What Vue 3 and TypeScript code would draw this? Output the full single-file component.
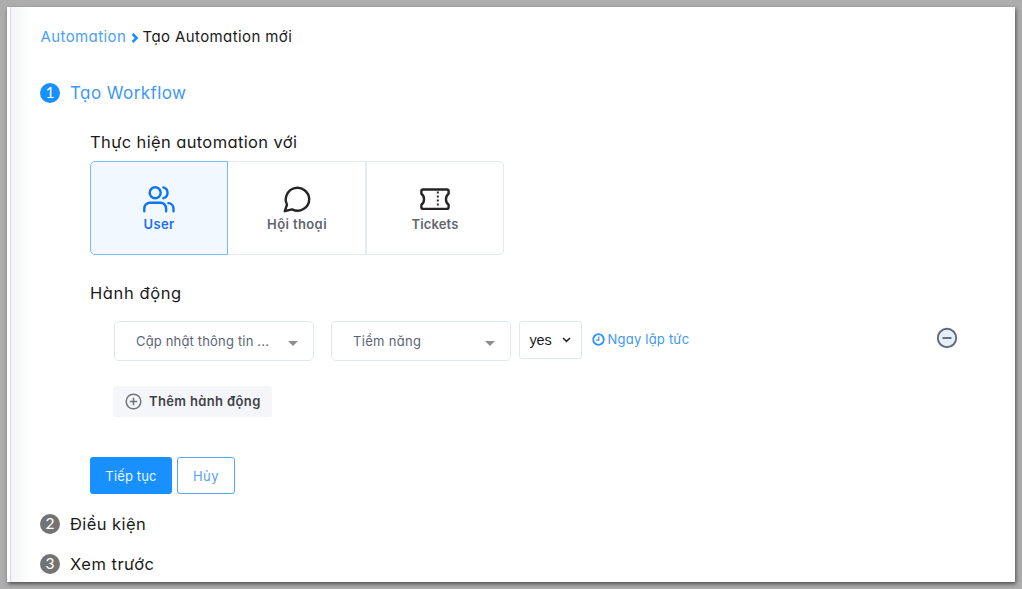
<script setup lang="ts">
import { ref } from 'vue'

type Target = 'user' | 'chat' | 'ticket'

const targets: { id: Target; label: string }[] = [
  { id: 'user', label: 'User' },
  { id: 'chat', label: 'Hội thoại' },
  { id: 'ticket', label: 'Tickets' },
]
const selected = ref<Target>('user')
</script>

<template>
  <div class="frame">
    <main class="panel">
      <nav class="breadcrumb">
        <a class="crumb-link">Automation</a>
        <svg class="crumb-sep" width="8" height="10" viewBox="0 0 8 10"><path d="M1.6 1l4 4-4 4" /></svg>
        <span class="crumb-current">Tạo Automation mới</span>
      </nav>

      <div class="step step-1">
        <span class="badge active">1</span>
        <span class="step-title active t-workflow">Tạo Workflow</span>
      </div>

      <section class="body">
        <h3 class="heading h-target">Thực hiện automation với</h3>
        <div class="targets">
          <button
            v-for="t in targets"
            :key="t.id"
            class="target"
            :class="[t.id, { selected: selected === t.id }]"
            @click="selected = t.id"
          >
            <svg v-if="t.id === 'user'" class="icon" width="34" height="30" viewBox="0 0 34 30">
              <circle cx="13.2" cy="8.8" r="5.5" />
              <path d="M2.3 27.2v-2.8a5.6 5.6 0 0 1 5.6-5.6h10.6a5.6 5.6 0 0 1 5.6 5.6v2.8" />
              <path d="M21.4 3.4a5.6 5.6 0 0 1 0 10.8" />
              <path d="M26.4 19.1a5.5 5.5 0 0 1 5.1 5.4v2.7" />
            </svg>
            <svg v-else-if="t.id === 'chat'" class="icon" width="34" height="30" viewBox="0 0 34 30">
              <path d="M29.2 15.2a11.7 11.7 0 0 1-17.1 10.2L4.8 27.2l2.2-6.5A11.7 11.7 0 1 1 29.2 15.2z" />
            </svg>
            <svg v-else class="icon" width="34" height="30" viewBox="0 0 34 30">
              <path d="M5 5.5h24a1.6 1.6 0 0 1 1.6 1.6v2.6c-3.5 2.6-3.5 8.4 0 11v2.6a1.6 1.6 0 0 1-1.6 1.6H5a1.6 1.6 0 0 1-1.6-1.6v-2.6c3.5-2.6 3.5-8.4 0-11V7.1A1.6 1.6 0 0 1 5 5.5z" />
              <path class="perforation" d="M19.8 7.6v16" />
            </svg>
            <span class="target-label">{{ t.label }}</span>
          </button>
        </div>

        <h3 class="heading h-action">Hành động</h3>
        <div class="action-row">
          <div class="select wide">
            <span class="s-update">Cập nhật thông tin ...</span>
            <i class="caret"></i>
          </div>
          <div class="select mid">
            <span class="s-potential">Tiềm năng</span>
            <i class="caret"></i>
          </div>
          <div class="native">
            <span>yes</span>
            <svg width="9" height="6" viewBox="0 0 9 6"><path d="M1 1l3.5 3.4L8 1" /></svg>
          </div>
          <a class="when">
            <svg width="13" height="13" viewBox="0 0 13 13">
              <circle cx="6.5" cy="6.5" r="5.3" />
              <path class="hand" d="M6.8 3.6v3.5H4" />
            </svg>
            <span>Ngay lập tức</span>
          </a>
          <svg class="remove" width="22" height="22" viewBox="0 0 22 22">
            <circle cx="11" cy="11" r="9.2" />
            <path d="M6.5 11h9" />
          </svg>
        </div>

        <button class="add">
          <svg width="17" height="17" viewBox="0 0 17 17">
            <circle cx="8.5" cy="8.5" r="7.3" />
            <path d="M8.5 4.8v7.4M4.8 8.5h7.4" />
          </svg>
          <span>Thêm hành động</span>
        </button>

        <div class="buttons">
          <button class="btn primary">Tiếp tục</button>
          <button class="btn outline">Hủy</button>
        </div>
      </section>

      <div class="step step-2">
        <span class="badge">2</span>
        <span class="step-title t-condition">Điều kiện</span>
      </div>
      <div class="step step-3">
        <span class="badge">3</span>
        <span class="step-title t-preview">Xem trước</span>
      </div>
    </main>
  </div>
</template>

<style>
html,
body {
  margin: 0;
  background: #adadad;
}
</style>

<style scoped>
.frame {
  box-sizing: border-box;
  width: 1022px;
  height: 589px;
  padding: 7px;
  overflow: hidden;
  background: #adadad;
  font-family: Inter, 'Noto Sans', sans-serif;
  font-feature-settings: 'cv11', 'ss03';
  color: #1a1a1a;
}
.panel {
  box-sizing: border-box;
  width: 1008px;
  height: 575px;
  padding: 20px 0 0 33px;
  background:
    linear-gradient(#d9dce0, #d9dce0) 3px 0 / 1px 100% no-repeat,
    linear-gradient(to right, #f3f4f6, #ffffff) 4px 0 / 20px 100% no-repeat,
    #ffffff;
  box-shadow: 1px 2px 4px rgba(0, 0, 0, 0.55);
}
button {
  font: inherit;
  font-feature-settings: inherit;
  margin: 0;
  padding: 0;
  border: 0;
  background: none;
}
svg {
  display: block;
  fill: none;
  flex: none;
}
.breadcrumb {
  display: flex;
  align-items: center;
  height: 20px;
  padding-left: 0.5px;
  font-size: 15px;
  letter-spacing: 0.4px;
  line-height: 20px;
  white-space: nowrap;
}
.crumb-link {
  width: 90px;
  color: #4aa0f8;
}
.crumb-sep {
  width: 8px;
  margin: 1px 4px 0 0;
  stroke: #1b8cff;
  stroke-width: 2.5;
}
.step {
  display: flex;
  align-items: center;
  height: 24px;
}
.step-1 {
  margin-top: 34px;
}
.badge {
  width: 20px;
  height: 20px;
  margin-right: 10px;
  border-radius: 50%;
  background: #737373;
  color: #ffffff;
  font-family: Lato, sans-serif;
  font-size: 15.5px;
  line-height: 19px;
  text-align: center;
}
.badge.active {
  background: #1890ff;
}
.step-title {
  font-size: 16.5px;
  white-space: nowrap;
}
.step-title.active {
  color: #3d98f8;
}
.t-workflow {
  font-size: 17px;
  letter-spacing: 0.42px;
}
.t-condition {
  letter-spacing: 0.42px;
}
.t-preview {
  letter-spacing: 0.5px;
}
.body {
  padding-left: 50px;
}
.heading {
  height: 24px;
  margin: 0;
  font-size: 16.5px;
  font-weight: 400;
  line-height: 24px;
  white-space: nowrap;
}
.h-target {
  margin-top: 25px;
  letter-spacing: 0.37px;
}
.targets {
  display: flex;
  margin-top: 7px;
}
.target {
  box-sizing: border-box;
  display: flex;
  flex-direction: column;
  align-items: center;
  width: 138px;
  height: 94px;
  padding-top: 22px;
  border: 1px solid #e2eaf2;
  border-left-width: 0;
  color: #5f6670;
}
.target:first-child {
  border-radius: 5px 0 0 5px;
}
.target:last-child {
  border-left-width: 1px;
  border-radius: 0 5px 5px 0;
}
.target.selected {
  border: 1px solid #7dbbf6;
  background: #f1f8ff;
  color: #1f70e8;
}
.icon {
  stroke: #242424;
  stroke-width: 2.4;
  stroke-linecap: round;
  stroke-linejoin: round;
}
.selected .icon {
  stroke: #0b74f0;
}
.icon .perforation {
  stroke-width: 1.9;
  stroke-linecap: butt;
  stroke-dasharray: 2 2;
}
.target-label {
  height: 18px;
  font-size: 13px;
  font-weight: 600;
  letter-spacing: 0.3px;
  line-height: 21px;
}
.chat .target-label {
  padding-left: 1px;
  letter-spacing: 0.4px;
}
.ticket .target-label {
  letter-spacing: 0.12px;
}
.h-action {
  margin-top: 26px;
  letter-spacing: 0.6px;
}
.action-row {
  display: flex;
  align-items: flex-start;
  height: 40px;
  margin-top: 16px;
  padding-left: 24px;
}
.select {
  box-sizing: border-box;
  display: flex;
  align-items: center;
  justify-content: space-between;
  height: 40px;
  padding: 0 15px 0 21px;
  border: 1px solid #e0e8f1;
  border-radius: 5px;
  color: #5a6675;
  font-size: 13px;
  white-space: nowrap;
}
.select.wide {
  width: 200px;
  margin-right: 17px;
}
.select.mid {
  width: 180px;
  margin-right: 8px;
}
.s-update {
  letter-spacing: 0.17px;
}
.s-potential {
  letter-spacing: 0.33px;
}
.caret {
  margin-top: 4px;
  border: 5px solid transparent;
  border-top-color: #8d8d8d;
  border-bottom: 0;
}
.native {
  box-sizing: border-box;
  display: flex;
  align-items: center;
  justify-content: space-between;
  width: 63px;
  height: 38px;
  padding: 0 10.5px 0 9.5px;
  border: 1px solid #e0e8f1;
  border-radius: 3px;
  font-family: 'Liberation Sans', sans-serif;
  font-size: 14.5px;
  letter-spacing: -0.2px;
}
.native svg {
  stroke: #222222;
  stroke-width: 1.5;
}
.when {
  display: flex;
  align-items: center;
  gap: 3px;
  height: 36px;
  margin-left: 9.5px;
  color: #3d98f8;
  font-size: 13px;
  letter-spacing: 0.22px;
  white-space: nowrap;
}
.when svg {
  stroke: #2f93fb;
  stroke-width: 1.8;
}
.when .hand {
  stroke-width: 1.2;
}
.remove {
  margin: 6px 57px 0 auto;
  fill: #e6eff6;
  stroke: #5d6b7c;
  stroke-width: 1.9;
}
.add {
  box-sizing: border-box;
  display: flex;
  align-items: center;
  width: 159px;
  height: 31px;
  margin: 25px 0 0 23px;
  padding-left: 12px;
  border-radius: 3px;
  background: #f4f6fa;
  color: #404247;
  font-size: 13px;
  font-weight: 600;
  letter-spacing: 0.36px;
  white-space: nowrap;
}
.add span {
  padding-bottom: 2px;
}
.add svg {
  margin-right: 7px;
  stroke: #6d7480;
  stroke-width: 1.5;
}
.buttons {
  display: flex;
  gap: 5px;
  margin-top: 40px;
}
.btn {
  box-sizing: border-box;
  height: 37px;
  border-radius: 3px;
  font-size: 13px;
}
.btn.primary {
  width: 82px;
  background: #1890ff;
  color: #e9f4ff;
  letter-spacing: 0.15px;
}
.btn.outline {
  width: 58px;
  border: 1px solid #5ba4f2;
  color: #5a9ff0;
  letter-spacing: 0.4px;
}
.step-2 {
  margin-top: 18px;
}
.step-3 {
  margin-top: 16px;
}
</style>
